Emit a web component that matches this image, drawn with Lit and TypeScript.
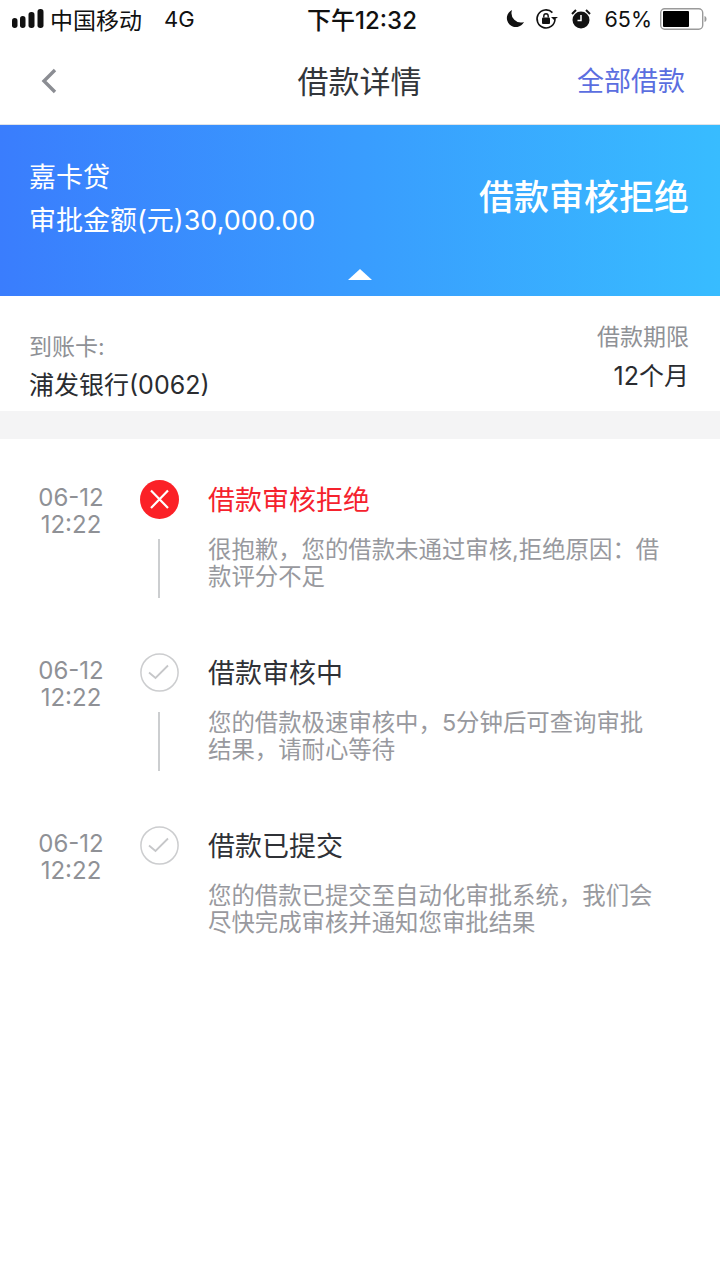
import { LitElement, html, css } from "lit";
import { customElement } from "lit/decorators.js";

const items = [
  { title: "借款审核拒绝", desc: "很抱歉，您的借款未通过审核,拒绝原因：借款评分不足", fail: true, line: true },
  { title: "借款审核中", desc: "您的借款极速审核中，5分钟后可查询审批结果，请耐心等待", fail: false, line: true },
  { title: "借款已提交", desc: "您的借款已提交至自动化审批系统，我们会尽快完成审核并通知您审批结果", fail: false, line: false },
];

@customElement("app-root")
export class AppRoot extends LitElement {
  static styles = css`
    :host {
      display: block;
      width: 720px;
      height: 1280px;
      background: #fff;
      overflow: hidden;
      font-family: "Inter", "Noto Sans CJK SC", sans-serif;
      color: #2f3136;
    }
    .status {
      height: 40px;
      display: flex;
      align-items: center;
      justify-content: space-between;
      padding: 0 13px 3px 12px;
      box-sizing: border-box;
      font-size: 23px;
      color: #111;
    }
    .status > div { display: flex; align-items: center; flex: 1; }
    .status .clock { flex: none; font-weight: 500; font-size: 24px; margin-left: 5px; }
    .status .right { justify-content: flex-end; }
    .carrier { margin-left: 6px; }
    .net { margin-left: 22px; font-size: 22px; }
    .pct { margin: 0 8px 0 12px; font-size: 21.5px; }
    .nav {
      height: 84px;
      display: grid;
      grid-template-columns: 1fr auto 1fr;
      align-items: center;
      padding: 0 35px 0 34px;
      border-bottom: 1px solid #dfe3e8;
      box-sizing: content-box;
    }
    .nav svg { margin-left: 6px; margin-top: -2px; }
    .nav .title { font-size: 31px; color: #33363b; line-height: 40px; }
    .nav .all { justify-self: end; font-size: 27px; color: #5b6ee0; line-height: 40px; }
    .banner {
      height: 171px;
      background: linear-gradient(90deg, #3a7dfd, #38bcff);
      color: #fff;
      display: flex;
      justify-content: space-between;
      padding: 33px 31px 0 29px;
      box-sizing: border-box;
      position: relative;
    }
    .name { font-size: 27px; line-height: 40px; }
    .amount { font-size: 27px; line-height: 43px; margin-top: 1px; }
    .result { font-size: 35px; font-weight: 500; line-height: 50px; margin-top: 14px; }
    .arrow {
      position: absolute;
      left: 348px;
      bottom: 16px;
      width: 0;
      height: 0;
      border-left: 12px solid transparent;
      border-right: 12px solid transparent;
      border-bottom: 11px solid #fff;
    }
    .info {
      height: 115px;
      display: flex;
      justify-content: space-between;
      padding: 0 31px 0 29px;
      box-sizing: border-box;
    }
    .info .label { font-size: 23px; color: #8f9196; }
    .card .label { line-height: 34px; margin-top: 34px; }
    .card .value { font-size: 25px; line-height: 40px; margin-top: 1px; color: #2a2c30; }
    .term { text-align: right; }
    .term .label { line-height: 34px; margin-top: 24px; }
    .term .value { font-size: 25px; line-height: 40px; margin-top: 2px; color: #2a2c30; }
    .gap { height: 28px; background: #f4f4f5; }
    .row {
      height: 173px;
      display: grid;
      grid-template-columns: 142px 37px 1fr;
      padding-top: 41px;
      box-sizing: border-box;
    }
    .date { font-size: 24px; line-height: 27px; color: #8f9196; text-align: center; padding-top: 4px; }
    .node { display: flex; flex-direction: column; align-items: center; margin-left: -2px; width: 39px; }
    .node svg { display: block; }
    .line { width: 2px; height: 59px; background: #ccced0; margin: 20px 2px 0 0; }
    .text { padding-left: 29px; padding-right: 56px; }
    .ttl { font-size: 27px; line-height: 40px; color: #2f3136; padding-top: 1px; }
    .ttl.fail { color: #f5222d; }
    .desc { font-size: 23.4px; line-height: 27px; color: #98999e; margin-top: 15px; word-break: break-all; }
  `;

  private icon(fail: boolean) {
    return fail
      ? html`<svg width="39" height="39" viewBox="0 0 39 39"><circle cx="19.5" cy="19.5" r="19.5" fill="#fb2127"/><path d="M11 10.500l17 17.500M28 10.500L11 28" stroke="#fff" stroke-width="2.2" fill="none"/></svg>`
      : html`<svg width="39" height="39" viewBox="0 0 39 39"><circle cx="19.5" cy="19.500" r="18.600" fill="none" stroke="#cccdcf" stroke-width="1.500"/><path d="M9 19.500l6.500 5.500L28 12.500" stroke="#c6c7c9" stroke-width="1.800" fill="none"/></svg>`;
  }

  render() {
    return html`
      <div class="status">
        <div>
          <svg width="32" height="22" viewBox="0 0 32 22">
            <rect x="0" y="10" width="5.500" height="10" rx="2.700" fill="#111"/>
            <rect x="8" y="8" width="5.500" height="12" rx="2.700" fill="#111"/>
            <rect x="16.500" y="4" width="6" height="16" rx="2.700" fill="#111"/>
            <rect x="25.500" y="1" width="6" height="19" rx="2.700" fill="#111"/>
          </svg>
          <span class="carrier">中国移动</span><span class="net">4G</span>
        </div>
        <div class="clock">下午12:32</div>
        <div class="right">
          <svg width="20" height="20" viewBox="0 0 20 20"><path d="M7 1a9 9 0 1 0 12 12A9.500 9.500 0 0 1 7 1z" fill="#111"/></svg>
          <svg style="margin-left:10px" width="24" height="22" viewBox="0 0 24 22">
            <path d="M20 11a9 9 0 1 1-2.600-6.400" fill="none" stroke="#111" stroke-width="1.600"/>
            <path d="M19 12l4-3h-7z" fill="#111"/>
            <rect x="7" y="9.500" width="8" height="6.500" rx="1" fill="#111"/>
            <path d="M8.800 9.500V8a2.200 2.200 0 0 1 4.400 0v1.500" fill="none" stroke="#111" stroke-width="1.400"/>
          </svg>
          <svg style="margin-left:11px" width="22" height="22" viewBox="0 0 22 22">
            <circle cx="11" cy="12" r="8.500" fill="#111"/>
            <path d="M11 7v5.500H7.500" stroke="#fff" stroke-width="1.500" fill="none"/>
            <path d="M2 6l4-4M20 6l-4-4" stroke="#111" stroke-width="2"/>
          </svg>
          <span class="pct">65%</span>
          <svg width="47" height="22" viewBox="0 0 47 22">
            <rect x="0.700" y="0.700" width="42" height="20.600" rx="4" fill="none" stroke="#9a9a9a" stroke-width="1.400"/>
            <rect x="3" y="3" width="26" height="16" rx="1" fill="#000"/>
            <path d="M44.500 8c1.500.5 2 1.500 2 3s-.5 2.500-2 3z" fill="#9a9a9a"/>
          </svg>
        </div>
      </div>
      <div class="nav">
        <svg width="20" height="26" viewBox="0 0 20 26"><path d="M16 2L5 13l11 11" transform="translate(-1 0)" fill="none" stroke="#8b8d93" stroke-width="3.400"/></svg>
        <div class="title">借款详情</div>
        <div class="all">全部借款</div>
      </div>
      <div class="banner">
        <div>
          <div class="name">嘉卡贷</div>
          <div class="amount">审批金额(元)30,000.00</div>
        </div>
        <div class="result">借款审核拒绝</div>
        <div class="arrow"></div>
      </div>
      <div class="info">
        <div class="card">
          <div class="label">到账卡:</div>
          <div class="value">浦发银行(0062)</div>
        </div>
        <div class="term">
          <div class="label">借款期限</div>
          <div class="value">12个月</div>
        </div>
      </div>
      <div class="gap"></div>
      ${items.map(
        (it) => html`
          <div class="row">
            <div class="date">06-12<br />12:22</div>
            <div class="node">
              ${this.icon(it.fail)}
              ${it.line ? html`<div class="line"></div>` : null}
            </div>
            <div class="text">
              <div class="ttl ${it.fail ? "fail" : ""}">${it.title}</div>
              <div class="desc">${it.desc}</div>
            </div>
          </div>
        `
      )}
    `;
  }
}
